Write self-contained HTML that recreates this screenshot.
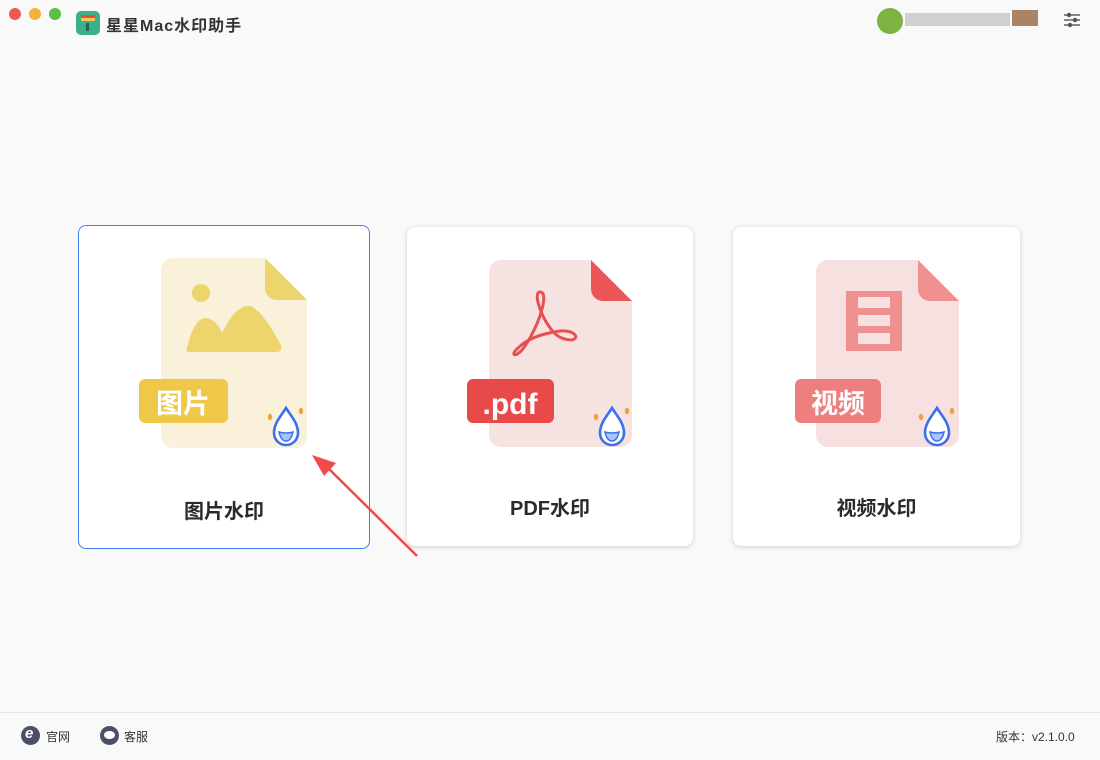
<!DOCTYPE html>
<html><head><meta charset="utf-8"><style>
body{margin:0;width:1100px;height:760px;background:#f9f9f9;font-family:"Liberation Sans","Noto Sans CJK SC",sans-serif;position:relative;overflow:hidden;color:#333}
.dot{position:absolute;top:8px;width:12px;height:12px;border-radius:50%}
.card{position:absolute;background:#fff;border-radius:8px;box-shadow:0 1px 5px rgba(0,0,0,.18)}
.t{position:absolute;left:0;right:0;text-align:center;font-size:20px;font-weight:bold;color:#2b2b2b}
.ft{position:absolute;top:728px;font-size:12px;color:#333}
.ic{position:absolute;top:726px;width:19px;height:19px;border-radius:50%;background:#4a5068}
</style></head><body>
<div class="dot" style="left:9px;background:#ee5a52"></div>
<div class="dot" style="left:29px;background:#f5b23a"></div>
<div class="dot" style="left:49px;background:#5bc144"></div>
<svg style="position:absolute;left:76px;top:11px" width="24" height="24"><rect width="24" height="24" rx="5" fill="#3fae8e"/><rect x="5" y="4" width="14" height="6" rx="1" fill="#f2c94c"/><rect x="5" y="4" width="14" height="3" fill="#e74c3c"/><rect x="10" y="12" width="3" height="8" fill="#265"/></svg>
<div style="position:absolute;left:106px;top:12px;font-size:16px;font-weight:bold;color:#333;letter-spacing:1px">星星Mac水印助手</div>
<div style="position:absolute;left:877px;top:8px;width:26px;height:26px;border-radius:50%;background:#7cb342"></div>
<div style="position:absolute;left:905px;top:13px;width:105px;height:13px;background:#d0d0d0"></div>
<div style="position:absolute;left:1012px;top:10px;width:26px;height:16px;background:#a88468"></div>
<svg style="position:absolute;left:1063px;top:12px" width="18" height="16" stroke="#555" stroke-width="1.4"><line x1="1" y1="3" x2="17" y2="3"/><line x1="1" y1="8" x2="17" y2="8"/><line x1="1" y1="13" x2="17" y2="13"/><circle cx="6" cy="3" r="1.5" fill="#555"/><circle cx="12" cy="8" r="1.5" fill="#555"/><circle cx="7" cy="13" r="1.5" fill="#555"/></svg>

<div class="card" style="left:78px;top:225px;width:290px;height:322px;border:1px solid #3f7ef0;box-shadow:none"><div class="t" style="top:269px">图片水印</div></div>
<div class="card" style="left:407px;top:227px;width:286px;height:319px"><div class="t" style="top:265px">PDF水印</div></div>
<div class="card" style="left:733px;top:227px;width:287px;height:319px"><div class="t" style="top:265px">视频水印</div></div>

<svg style="position:absolute;left:0;top:0" width="1100" height="760">
<defs><g id="drop"><path d="M16 3 C11 11 4 18 4 28 A12 12 0 0 0 28 28 C28 18 21 11 16 3Z" fill="#fff" stroke="#3a6ff0" stroke-width="2.6"/><path d="M9 27 Q16 29 23 27 Q21 36 16 36 Q11 36 9 27Z" fill="#a9c6fa" stroke="#3a6ff0" stroke-width="1.5"/><ellipse cx="0" cy="12" rx="2.2" ry="3.2" fill="#f0a040"/><ellipse cx="31" cy="6" rx="2.2" ry="3.2" fill="#f0a040"/></g></defs>
<path d="M173 258 H265 L307 300 V436 a12 12 0 0 1-12 12 H173 a12 12 0 0 1-12-12 V270 a12 12 0 0 1 12-12z" fill="#faf1da"/>
<path d="M265 258 L307 300 H277 a12 12 0 0 1-12-12z" fill="#eed46c"/>
<circle cx="201" cy="293" r="9" fill="#eed46c"/>
<path d="M187 348 Q194 318 206 318 Q216 319 222 333 Q235 305 250 306 Q262 310 281 345 Q283 352 276 352 H190 Q185 352 187 348z" fill="#eed46c"/>
<rect x="139" y="379" width="89" height="44" rx="6" fill="#efc84a"/>
<text x="183" y="413" font-size="27" font-weight="bold" fill="#fff" text-anchor="middle" font-family="Noto Sans CJK SC">图片</text>
<use href="#drop" transform="translate(270,405)"/>
<path d="M501 260 H591 L632 301 V435 a12 12 0 0 1-12 12 H501 a12 12 0 0 1-12-12 V272 a12 12 0 0 1 12-12z" fill="#f7e2e2"/>
<path d="M591 260 L632 301 H603 a12 12 0 0 1-12-12z" fill="#ea5555"/>
<path d="M540 292 C535 292 537 305 545 320 C552 332 558 340 572 340 C580 338 575 330 560 331 C545 333 528 338 518 348 C510 355 515 358 522 350 C530 340 540 320 543 305 C545 295 543 292 540 292Z" fill="none" stroke="#e85050" stroke-width="3"/>
<rect x="467" y="379" width="87" height="44" rx="6" fill="#e84a4a"/>
<text x="510" y="414" font-size="30" font-weight="bold" fill="#fff" text-anchor="middle">.pdf</text>
<use href="#drop" transform="translate(596,405)"/>
<path d="M828 260 H918 L959 301 V435 a12 12 0 0 1-12 12 H828 a12 12 0 0 1-12-12 V272 a12 12 0 0 1 12-12z" fill="#f7e0e0"/>
<path d="M918 260 L959 301 H930 a12 12 0 0 1-12-12z" fill="#f09090"/>
<rect x="846" y="291" width="56" height="60" fill="#f09090"/>
<rect x="858" y="297" width="32" height="11" fill="#f7e0e0"/><rect x="858" y="315" width="32" height="11" fill="#f7e0e0"/><rect x="858" y="333" width="32" height="11" fill="#f7e0e0"/>
<rect x="795" y="379" width="86" height="44" rx="6" fill="#ee7f7f"/>
<text x="838" y="413" font-size="27" font-weight="bold" fill="#fff" text-anchor="middle" font-family="Noto Sans CJK SC">视频</text>
<use href="#drop" transform="translate(921,405)"/>
<line x1="417" y1="556" x2="326" y2="466" stroke="#f04a4a" stroke-width="2.5"/>
<path d="M312 455 L336 463 L324 476Z" fill="#f04a4a"/>
</svg>

<div style="position:absolute;left:0;top:712px;width:1100px;height:1px;background:#e6e6e6"></div>
<div class="ic" style="left:21px"><span style="position:absolute;left:4px;top:-1px;color:#fff;font-size:15px;font-weight:bold;font-style:italic">e</span></div>
<div class="ft" style="left:46px">官网</div>
<div class="ic" style="left:100px"><div style="position:absolute;left:4px;top:5px;width:11px;height:8px;border-radius:50%;background:#fff"></div></div>
<div class="ft" style="left:124px">客服</div>
<div class="ft" style="left:996px">版本：v2.1.0.0</div>
</body></html>
